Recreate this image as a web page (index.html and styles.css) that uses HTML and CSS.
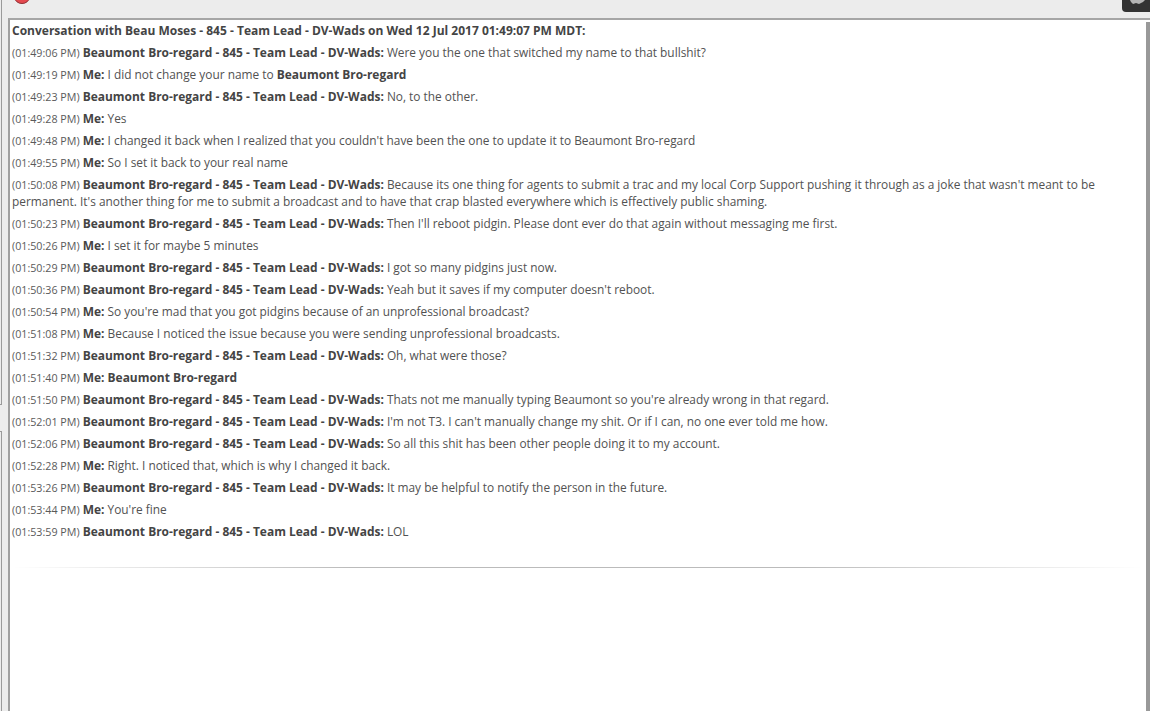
FILE: index.html
```html
<!DOCTYPE html>
<html lang="en">
<head>
    <meta charset="UTF-8">
    <title>Conversation with Beau Moses</title>
    <link rel="stylesheet" href="styles.css">
</head>
<body>
<div class="side">
    <div class="panel panel-top"></div>
    <div class="panel panel-bottom"></div>
</div>
<div class="main">
    <div class="toolbar">
        <svg class="stop" width="16" height="5" viewBox="0 0 16 5"><ellipse cx="8" cy="-2" rx="7" ry="5.5" fill="#e4484e" stroke="#8f3034"/></svg>
        <span class="tray">
            <svg width="28" height="12" viewBox="0 0 28 12"><path d="M8 0h15l-2 2-4 2-3-1-3 1-2-2z" fill="#b5b5b5"/></svg>
        </span>
    </div>
    <div class="frame">
        <span class="thumb"></span>
        <div class="log">
            <h1 class="title">Conversation with Beau Moses - 845 - Team Lead - DV-Wads on Wed 12 Jul 2017 01:49:07 PM MDT:</h1>
            <p><small>(01:49:06 PM)</small> <b>Beaumont Bro-regard - 845 - Team Lead - DV-Wads:</b> Were you the one that switched my name to that bullshit?</p>
            <p><small>(01:49:19 PM)</small> <b>Me:</b> I did not change your name to <b>Beaumont Bro-regard</b></p>
            <p><small>(01:49:23 PM)</small> <b>Beaumont Bro-regard - 845 - Team Lead - DV-Wads:</b> No, to the other.</p>
            <p><small>(01:49:28 PM)</small> <b>Me:</b> Yes</p>
            <p><small>(01:49:48 PM)</small> <b>Me:</b> I changed it back when I realized that you couldn't have been the one to update it to Beaumont Bro-regard</p>
            <p><small>(01:49:55 PM)</small> <b>Me:</b> So I set it back to your real name</p>
            <p><small>(01:50:08 PM)</small> <b>Beaumont Bro-regard - 845 - Team Lead - DV-Wads:</b> Because its one thing for agents to submit a trac and my local Corp Support pushing it through as a joke that wasn't meant to be permanent. It's another thing for me to submit a broadcast and to have that crap blasted everywhere which is effectively public shaming.</p>
            <p><small>(01:50:23 PM)</small> <b>Beaumont Bro-regard - 845 - Team Lead - DV-Wads:</b> Then I'll reboot pidgin. Please dont ever do that again without messaging me first.</p>
            <p><small>(01:50:26 PM)</small> <b>Me:</b> I set it for maybe 5 minutes</p>
            <p><small>(01:50:29 PM)</small> <b>Beaumont Bro-regard - 845 - Team Lead - DV-Wads:</b> I got so many pidgins just now.</p>
            <p><small>(01:50:36 PM)</small> <b>Beaumont Bro-regard - 845 - Team Lead - DV-Wads:</b> Yeah but it saves if my computer doesn't reboot.</p>
            <p><small>(01:50:54 PM)</small> <b>Me:</b> So you're mad that you got pidgins because of an unprofessional broadcast?</p>
            <p><small>(01:51:08 PM)</small> <b>Me:</b> Because I noticed the issue because you were sending unprofessional broadcasts.</p>
            <p><small>(01:51:32 PM)</small> <b>Beaumont Bro-regard - 845 - Team Lead - DV-Wads:</b> Oh, what were those?</p>
            <p><small>(01:51:40 PM)</small> <b>Me: Beaumont Bro-regard</b></p>
            <p><small>(01:51:50 PM)</small> <b>Beaumont Bro-regard - 845 - Team Lead - DV-Wads:</b> Thats not me manually typing Beaumont so you're already wrong in that regard.</p>
            <p><small>(01:52:01 PM)</small> <b>Beaumont Bro-regard - 845 - Team Lead - DV-Wads:</b> I'm not T3. I can't manually change my shit. Or if I can, no one ever told me how.</p>
            <p><small>(01:52:06 PM)</small> <b>Beaumont Bro-regard - 845 - Team Lead - DV-Wads:</b> So all this shit has been other people doing it to my account.</p>
            <p><small>(01:52:28 PM)</small> <b>Me:</b> Right. I noticed that, which is why I changed it back.</p>
            <p><small>(01:53:26 PM)</small> <b>Beaumont Bro-regard - 845 - Team Lead - DV-Wads:</b> It may be helpful to notify the person in the future.</p>
            <p><small>(01:53:44 PM)</small> <b>Me:</b> You're fine</p>
            <p><small>(01:53:59 PM)</small> <b>Beaumont Bro-regard - 845 - Team Lead - DV-Wads:</b> LOL</p>
            <hr class="rule">
        </div>
    </div>
</div>
</body>
</html>
```
FILE: styles.css
```css
* {
    margin: 0;
    padding: 0;
    box-sizing: border-box;
}

html, body {
    height: 711px;
    overflow: hidden;
}

body {
    background: #ececec;
    font-family: "Open Sans", sans-serif;
    font-size: 11.88px;
    line-height: 17px;
    color: #525252;
    display: flex;
}

.side {
    width: 8px;
    flex: none;
    display: flex;
    flex-direction: column;
    gap: 26px;
}

.panel {
    width: 2px;
    border-right: 1px solid #9a9a9a;
}

.panel-top {
    height: 405px;
    border-bottom: 1px solid #9a9a9a;
}

.panel-bottom {
    flex: 1;
    border-top: 1px solid #9a9a9a;
}

.main {
    flex: 1;
    display: flex;
    flex-direction: column;
    min-width: 0;
}

.toolbar {
    height: 18px;
    flex: none;
    display: flex;
    justify-content: space-between;
    align-items: flex-start;
    padding-left: 6px;
}

.stop {
    display: block;
}

.tray {
    width: 28px;
    height: 12px;
    background: #333;
    border-radius: 0 0 0 4px;
    display: flex;
}

.frame {
    flex: 1;
    position: relative;
    border-top: 2px solid #a6a6a6;
    border-left: 2px solid #a0a0a0;
    background: #fff;
}

.thumb {
    position: absolute;
    top: 2px;
    right: 0;
    bottom: 0;
    width: 4px;
    background: #999;
}

.log {
    padding: 0 4px 0 2px;
}

.title {
    font-size: 12px;
    font-weight: 700;
    line-height: 22px;
    color: #444;
}

.log p {
    padding: 2px 0 3px;
}

small {
    font-size: 10.72px;
    line-height: 1;
    color: #5a5a5a;
}

b {
    font-size: 11.96px;
    line-height: 1;
    font-weight: 700;
    color: #444;
}

.rule {
    border: 0;
    height: 1px;
    margin-top: 24px;
    margin-right: 4px;
    background: linear-gradient(to right, #fff 0, #bbb 30%, #bbb 70%, #fff 100%);
}
```
